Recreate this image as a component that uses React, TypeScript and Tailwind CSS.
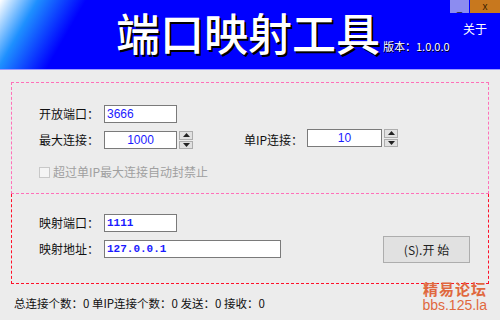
import React from "react";

const cjk = "font-['Noto_Sans_CJK_SC','Noto_Sans',sans-serif]";

function Spinner() {
  return (
    <div className="ml-[2px] flex h-[18px] w-[14px] flex-col gap-[1px]">
      <div className="flex h-[8.5px] items-center justify-center border border-[#adadad] bg-[#e1e1e1]">
        <svg width="7" height="4" viewBox="0 0 7 4">
          <path d="M0 4 L3.5 0 L7 4 Z" fill="#222" />
        </svg>
      </div>
      <div className="flex h-[8.5px] items-center justify-center border border-[#adadad] bg-[#e1e1e1]">
        <svg width="7" height="4" viewBox="0 0 7 4">
          <path d="M0 0 L3.5 4 L7 0 Z" fill="#222" />
        </svg>
      </div>
    </div>
  );
}

function Field({ value, w, center, bold }: { value: string; w: string; center?: boolean; bold?: boolean }) {
  return (
    <div
      className={`flex h-[18px] ${w} items-center border border-[#7a7a7a] bg-white px-[2px] text-[#1a1aff] ${
        center ? "justify-center" : ""
      } ${bold ? "font-['Liberation_Mono',monospace] text-[11px] font-bold" : "font-['Liberation_Sans',sans-serif] text-[12px]"}`}
    >
      {value}
    </div>
  );
}

export default function App() {
  return (
    <div className={`relative h-[320px] w-[500px] overflow-hidden bg-[#ececec] ${cjk} text-[12px] text-[#111]`}>
      <div className="relative h-[70px] border-b border-[#9a9aff] bg-[linear-gradient(120deg,#ffffff_0%,#1e90ff_7%,#0000ff_16%,#0000ff_100%)]">
        <div className="flex items-end pl-[116px] pt-[9px]">
          <span className="text-[44px] leading-[46px] font-medium text-white [text-shadow:2px_2px_0_#000]">
            端口映射工具
          </span>
          <span className="mb-[2px] ml-[3px] text-[11px] leading-[14px] text-white [text-shadow:1px_1px_0_#000]">
            版本：1.0.0.0
          </span>
        </div>
        <div className="absolute right-0 top-0 flex h-[13px]">
          <div className="flex w-[19px] items-center justify-center bg-[#8c8cf0] text-[10px] leading-none text-black">_</div>
          <div className="ml-[1px] flex w-[30px] items-center justify-center bg-[#c8781e] font-['Liberation_Sans',sans-serif] text-[10px] leading-none text-[#3a2000]">
            x
          </div>
        </div>
        <div className="absolute right-[13px] top-[20px] text-[12px] text-white">关于</div>
      </div>

      <div className="px-[11px] pt-[12px]">
        <div className="h-[112px] border border-dashed border-[#ff70b8] pl-[27px] pt-[22px]">
          <div className="flex h-[18px] items-center">
            <span className="w-[65px]">开放端口：</span>
            <Field value="3666" w="w-[73px]" />
          </div>
          <div className="mt-[8px] flex h-[18px] items-center">
            <span className="w-[65px]">最大连接：</span>
            <Field value="1000" w="w-[73px]" center />
            <Spinner />
            <span className="ml-[51px] w-[63px]">单IP连接：</span>
            <div className="flex -translate-y-[2px] items-center">
              <Field value="10" w="w-[75px]" center />
              <Spinner />
            </div>
          </div>
          <div className="mt-[14px] flex items-center text-[#a0a0a0]">
            <div className="h-[11px] w-[11px] border border-[#c8c8c8] bg-[#f4f4f4]" />
            <span className="ml-[3px]">超过单IP最大连接自动封禁止</span>
          </div>
        </div>

        <div className="flex h-[90px] border border-t-0 border-dashed border-[#ff1028] pl-[27px] pt-[20px]">
          <div className="flex flex-col gap-[8px]">
            <div className="flex h-[18px] items-center">
              <span className="w-[65px]">映射端口：</span>
              <Field value="1111" w="w-[73px]" bold />
            </div>
            <div className="flex h-[18px] items-center">
              <span className="w-[65px]">映射地址：</span>
              <Field value="127.0.0.1" w="w-[177px]" bold />
            </div>
          </div>
          <button className="ml-[102px] mt-[22px] flex h-[27px] w-[87px] items-center justify-center border border-[#adadad] bg-[#e1e1e1] text-[12px] text-[#222]">
            (S).开 始
          </button>
        </div>

        <div className="pl-[3px] pt-[11px] text-[11.5px]">总连接个数：0 单IP连接个数：0 发送：0 接收：0</div>
      </div>

      <div className="absolute bottom-[7px] right-[13px] flex flex-col items-end gap-[1px] text-[#e0683e]">
        <span className="text-[15px] leading-[17px] font-bold tracking-[1px]">精易论坛</span>
        <span className="font-['Liberation_Sans',sans-serif] text-[14px] leading-[15px]">bbs.125.la</span>
      </div>
    </div>
  );
}
